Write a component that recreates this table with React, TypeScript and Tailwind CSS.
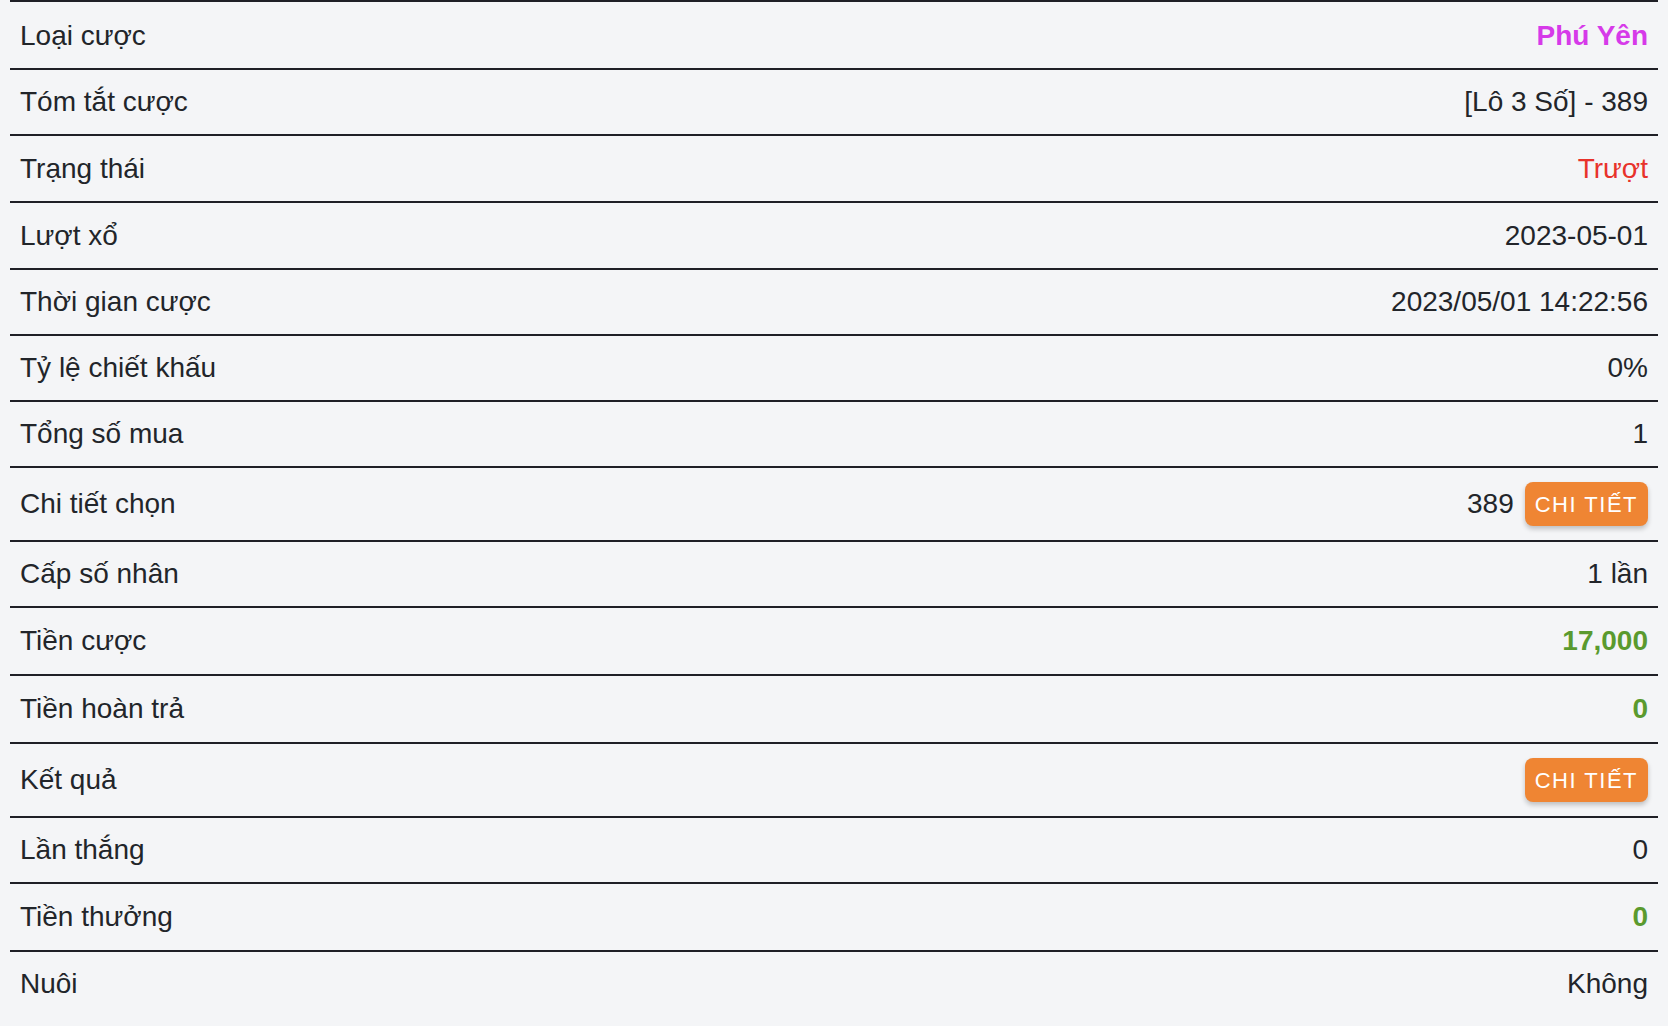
import React from "react";

type Row = {
  label: string;
  value?: string;
  tone?: "purple" | "red" | "green";
  button?: boolean;
};

const rows: Row[] = [
  { label: "Loại cược", value: "Phú Yên", tone: "purple" },
  { label: "Tóm tắt cược", value: "[Lô 3 Số] - 389" },
  { label: "Trạng thái", value: "Trượt", tone: "red" },
  { label: "Lượt xổ", value: "2023-05-01" },
  { label: "Thời gian cược", value: "2023/05/01 14:22:56" },
  { label: "Tỷ lệ chiết khấu", value: "0%" },
  { label: "Tổng số mua", value: "1" },
  { label: "Chi tiết chọn", value: "389", button: true },
  { label: "Cấp số nhân", value: "1 lần" },
  { label: "Tiền cược", value: "17,000", tone: "green" },
  { label: "Tiền hoàn trả", value: "0", tone: "green" },
  { label: "Kết quả", button: true },
  { label: "Lần thắng", value: "0" },
  { label: "Tiền thưởng", value: "0", tone: "green" },
  { label: "Nuôi", value: "Không" },
];

const toneClass = {
  purple: "text-[#d63ae9] font-bold",
  red: "text-[#e8322b]",
  green: "text-[#5a9a2e] font-bold",
};

const DetailButton = () => (
  <button className="h-[44px] px-[10px] rounded-[8px] bg-[#ef8533] text-white text-[22px] tracking-[1.5px] shadow-[0_3px_5px_rgba(0,0,0,0.22)]">
    CHI TIẾT
  </button>
);

export default function App() {
  return (
    <div className="min-h-screen bg-[#f4f5f7] px-[10px] text-[28px] text-[#22252a] font-['Liberation_Sans',Arial,sans-serif]">
      <div className="border-t-2 border-[#1f2026]">
        {rows.map((row, i) => {
          // a few rows in the original sit a pixel taller
          const lead =
            row.tone === "green"
              ? "leading-[38px]"
              : i === 2 || i === 3
                ? "leading-[37px]"
                : "leading-[36px]";
          return (
            <div
              key={row.label}
              className={`flex items-center justify-between px-[10px] pb-[14px] ${
                i === 0 ? "pt-[16px]" : "pt-[14px]"
              } ${i < rows.length - 1 ? "border-b-2 border-[#1f2026]" : ""}`}
            >
              <span className={lead}>{row.label}</span>
              <div className="flex items-center gap-[11px]">
                {row.value && (
                  <span className={`${lead} ${row.tone ? toneClass[row.tone] : ""}`}>
                    {row.value}
                  </span>
                )}
                {row.button && <DetailButton />}
              </div>
            </div>
          );
        })}
      </div>
    </div>
  );
}
